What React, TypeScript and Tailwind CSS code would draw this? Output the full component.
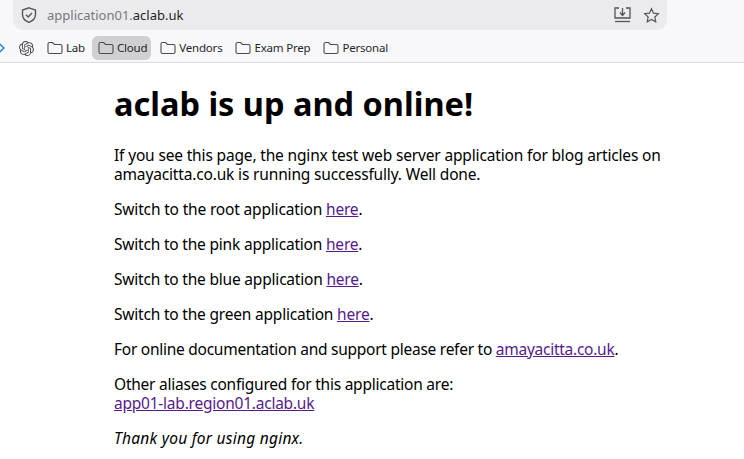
import React from "react";
import { SiOpenai } from "react-icons/si";

const font = { fontFamily: '"Noto Sans", sans-serif' };

function Folder() {
  return (
    <svg width="16" height="14" viewBox="0 0 16 14" fill="none" stroke="#4b4b50" strokeWidth="1.1" className="shrink-0">
      <path d="M1 3 Q1 1.5 2.5 1.5 H5.5 L7.5 3.5 H13.5 Q15 3.5 15 5 V11 Q15 12.5 13.5 12.5 H2.5 Q1 12.5 1 11 Z" />
    </svg>
  );
}

function Bookmark({ label, active }: { label: string; active?: boolean }) {
  return (
    <div className={`flex h-6 items-center gap-[3px] rounded-md pl-[6px] pr-[4px] ${active ? "bg-[#d0d0d2]" : ""}`}>
      <Folder />
      <span className="text-[11.5px] tracking-[-0.2px] text-[#26262a]">{label}</span>
    </div>
  );
}

function Para({ children, className }: { children: React.ReactNode; className: string }) {
  return <p className={`text-[15.5px] leading-[19px] mb-4 ${className}`}>{children}</p>;
}

function A({ children }: { children: React.ReactNode }) {
  return <a className="text-[#551a8b] underline" href="#">{children}</a>;
}

export default function App() {
  return (
    <div className="h-[459px] w-[744px] overflow-hidden bg-white" style={font}>
      <div className="h-[63px] border-b border-[#dcdcde] bg-[#f8f8fa]">
        <div className="ml-[13px] flex h-[30px] w-[654px] items-center rounded-b-[10px] bg-[#ebebed] pl-[7px] pr-[7px]">
          <svg width="18" height="18" viewBox="0 0 18 18" fill="none" stroke="#55555a" strokeWidth="1.4">
            <path d="M9 1.8 L15.5 4 V8.5 C15.5 12.5 12.5 15 9 16.3 C5.5 15 2.5 12.5 2.5 8.5 V4 Z" />
            <path d="M6 8.8 L8.2 11 L12 7" />
          </svg>
          <span className="ml-[9px] pt-[1px] text-[13px] text-[#77777c]">
            application01.<span className="text-[#1f1f22]">aclab.uk</span>
          </span>
          <div className="ml-auto flex items-center gap-[12px]">
            <svg width="17" height="16" viewBox="0 0 17 16" fill="none" stroke="#55555a" strokeWidth="1.3">
              <path d="M5 1 H1 V11 H16 V1 H12" />
              <path d="M8.5 1 V8 M6 5.5 L8.5 8.5 L11 5.5" />
              <path d="M1 14.5 H16" />
            </svg>
            <svg width="17" height="17" viewBox="0 0 24 24" fill="none" stroke="#55555a" strokeWidth="1.7">
              <path d="M12 2.5 L14.9 8.7 L21.6 9.5 L16.7 14.1 L18 20.8 L12 17.5 L6 20.8 L7.3 14.1 L2.4 9.5 L9.1 8.7 Z" />
            </svg>
          </div>
        </div>
        <div className="mt-[6px] flex h-6 items-center">
          <svg width="5" height="14" viewBox="0 0 5 14" fill="none" className="mr-[14px]">
            <path d="M-2 1.5 L4 7 L-2 12.5" stroke="#1a7fd0" strokeWidth="1.5" />
          </svg>
          <SiOpenai className="mr-[3px] h-[15px] w-[15px] text-[#4a4a4e]" />
          <div className="ml-[4px] flex items-center gap-[3px]">
            <Bookmark label="Lab" />
            <Bookmark label="Cloud" active />
            <Bookmark label="Vendors" />
            <Bookmark label="Exam Prep" />
            <Bookmark label="Personal" />
          </div>
        </div>
      </div>
      <main className="w-[560px] pl-[114px] box-content text-black">
        <h1 className="mt-[22px] mb-[23px] text-[32.5px] leading-[38px] font-bold">aclab is up and online!</h1>
        <Para className="tracking-[-0.16px]">If you see this page, the nginx test web server application for blog articles on amayacitta.co.uk is running successfully. Well done.</Para>
        <Para className="tracking-[-0.17px]">Switch to the root application <A>here</A>.</Para>
        <Para className="tracking-[-0.2px]">Switch to the pink application <A>here</A>.</Para>
        <Para className="tracking-[-0.2px]">Switch to the blue application <A>here</A>.</Para>
        <Para className="tracking-[-0.2px]">Switch to the green application <A>here</A>.</Para>
        <Para className="tracking-[-0.26px]">For online documentation and support please refer to <A>amayacitta.co.uk</A>.</Para>
        <Para className="tracking-[-0.23px]">Other aliases configured for this application are:<br /><A>app01-lab.region01.aclab.uk</A></Para>
        <Para className="tracking-[0.25px]"><em>Thank you for using nginx.</em></Para>
      </main>
    </div>
  );
}
